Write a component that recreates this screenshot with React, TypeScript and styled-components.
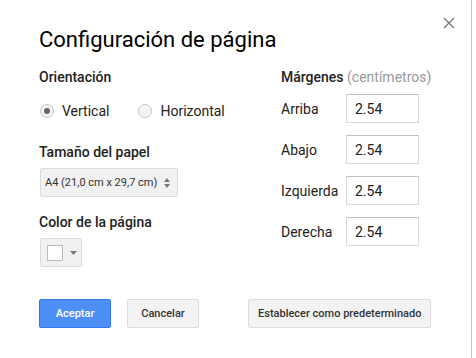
import React from 'react';
import styled, { createGlobalStyle } from 'styled-components';

const GlobalStyle = createGlobalStyle`
  html, body {
    margin: 0;
    padding: 0;
    background: #fff;
  }
  body {
    font-family: Roboto, "Liberation Sans", Arial, sans-serif;
    color: #222;
  }
`;

const Dialog = styled.div`
  position: relative;
  box-sizing: border-box;
  width: 472px;
  height: 358px;
  border-right: 1px solid #c4c4c4;
  padding: 27px 0 0 39px;
`;

const CloseButton = styled.button`
  position: absolute;
  top: 16px;
  right: 15px;
  width: 14px;
  height: 14px;
  padding: 0;
  border: 0;
  background: transparent;
  display: flex;
  align-items: center;
  justify-content: center;
`;

const Title = styled.h1`
  margin: 0;
  font-size: 22px;
  line-height: 26px;
  font-weight: 400;
  color: #000;
`;

const Body = styled.div`
  display: grid;
  grid-template-columns: 242px 1fr;
  margin-top: 16px;
`;

const Column = styled.div`
  display: flex;
  flex-direction: column;
  align-items: flex-start;
`;

const Heading = styled.div<{ $top?: number }>`
  font-size: 14px;
  line-height: 16px;
  font-weight: 500;
  color: #222;
  margin-top: ${p => p.$top ?? 0}px;
  white-space: nowrap;
`;

const Muted = styled.span`
  font-weight: 400;
  color: #999;
`;

const RadioRow = styled.div`
  display: flex;
  align-items: center;
  height: 20px;
  margin-top: 16px;
`;

const RadioOption = styled.label`
  display: flex;
  align-items: center;
  font-size: 14px;
  color: #222;
  margin-right: 28px;
  margin-left: 1px;
`;

const RadioCircle = styled.span<{ $checked?: boolean }>`
  box-sizing: border-box;
  width: 14px;
  height: 14px;
  border-radius: 50%;
  border: 1px solid #c6c6c6;
  background: #f4f4f4;
  margin-right: 8px;
  display: flex;
  align-items: center;
  justify-content: center;
  &::after {
    content: '';
    display: ${p => (p.$checked ? 'block' : 'none')};
    width: 6px;
    height: 6px;
    border-radius: 50%;
    background: #666;
  }
`;

const Select = styled.div`
  box-sizing: border-box;
  margin-top: 8px;
  margin-left: 1px;
  height: 29px;
  width: 138px;
  padding: 0 0 0 4px;
  display: flex;
  align-items: center;
  gap: 7px;
  background: #f1f1f1;
  border: 1px solid #dcdcdc;
  border-radius: 2px;
  font-size: 11px;
  color: #333;
  white-space: nowrap;
`;

const ColorButton = styled.div`
  box-sizing: border-box;
  margin-top: 8px;
  margin-left: 1px;
  height: 29px;
  width: 42px;
  padding: 0 0 0 6px;
  display: flex;
  align-items: center;
  gap: 7px;
  background: #f1f1f1;
  border: 1px solid #dcdcdc;
  border-radius: 2px;
`;

const Swatch = styled.span`
  box-sizing: border-box;
  width: 16px;
  height: 16px;
  background: #fff;
  border: 1px solid #bbb;
`;

const MarginRows = styled.div`
  display: flex;
  flex-direction: column;
  gap: 12px;
  margin-top: 9px;
`;

const MarginRow = styled.div`
  display: grid;
  grid-template-columns: 65px 73px;
  align-items: center;
`;

const MarginLabel = styled.span`
  font-size: 14px;
  color: #222;
`;

const MarginInput = styled.input`
  box-sizing: border-box;
  width: 73px;
  height: 29px;
  border: 1px solid #d9d9d9;
  border-top-color: #c0c0c0;
  padding: 0 8px;
  font-family: inherit;
  font-size: 14px;
  color: #222;
  outline: none;
`;

const Footer = styled.div`
  display: flex;
  align-items: center;
  margin-top: 32px;
`;

const Button = styled.button<{ $primary?: boolean; $gap?: number }>`
  box-sizing: border-box;
  height: 29px;
  min-width: 72px;
  padding: 0 9px;
  margin-left: ${p => p.$gap ?? 0}px;
  border-radius: 2px;
  font-family: inherit;
  font-size: 11px;
  font-weight: 500;
  border: 1px solid ${p => (p.$primary ? '#3079ed' : '#dcdcdc')};
  background: ${p => (p.$primary ? '#4d8ff6' : '#f3f3f3')};
  color: ${p => (p.$primary ? '#fff' : '#333')};
  white-space: nowrap;
`;

const margins = ['Arriba', 'Abajo', 'Izquierda', 'Derecha'];

export default function App() {
  return (
    <>
      <GlobalStyle />
      <Dialog>
        <CloseButton aria-label="Cerrar">
          <svg width="12" height="12" viewBox="0 0 12 12">
            <path d="M1 1 L11 11 M11 1 L1 11" stroke="#777" strokeWidth="1.4" />
          </svg>
        </CloseButton>
        <Title>Configuración de página</Title>
        <Body>
          <Column>
            <Heading>Orientación</Heading>
            <RadioRow>
              <RadioOption>
                <RadioCircle $checked />
                Vertical
              </RadioOption>
              <RadioOption>
                <RadioCircle />
                Horizontal
              </RadioOption>
            </RadioRow>
            <Heading $top={23}>Tamaño del papel</Heading>
            <Select>
              <span>A4 (21,0 cm x 29,7 cm)</span>
              <svg width="6" height="10" viewBox="0 0 6 10">
                <path d="M0 4 L3 0 L6 4 Z M0 6 L3 10 L6 6 Z" fill="#777" />
              </svg>
            </Select>
            <Heading $top={17}>Color de la página</Heading>
            <ColorButton>
              <Swatch />
              <svg width="7" height="4" viewBox="0 0 7 4">
                <path d="M0 0 L7 0 L3.5 4 Z" fill="#777" />
              </svg>
            </ColorButton>
          </Column>
          <Column>
            <Heading>
              Márgenes <Muted>(centímetros)</Muted>
            </Heading>
            <MarginRows>
              {margins.map(m => (
                <MarginRow key={m}>
                  <MarginLabel>{m}</MarginLabel>
                  <MarginInput defaultValue="2.54" />
                </MarginRow>
              ))}
            </MarginRows>
          </Column>
        </Body>
        <Footer>
          <Button $primary>Aceptar</Button>
          <Button $gap={16}>Cancelar</Button>
          <Button $gap={49}>Establecer como predeterminado</Button>
        </Footer>
      </Dialog>
    </>
  );
}
